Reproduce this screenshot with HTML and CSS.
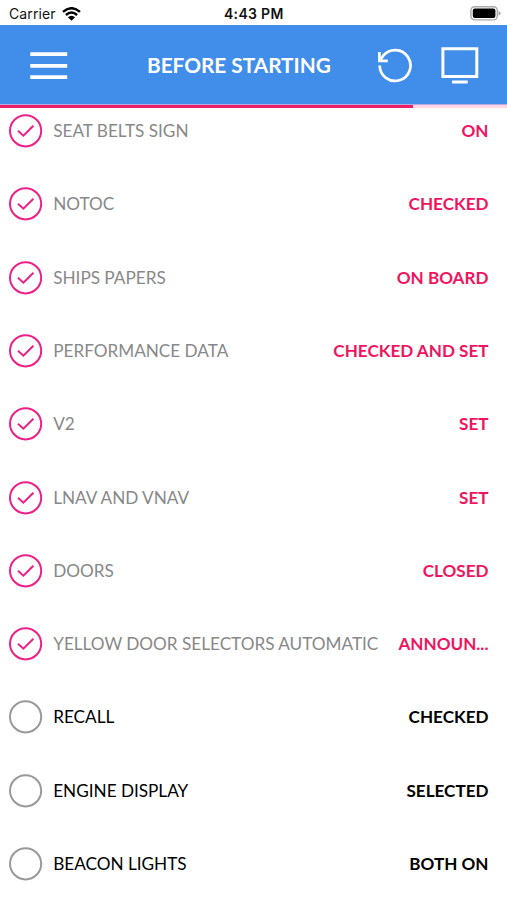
FILE: index.html
```html
<!DOCTYPE html>
<html lang="en">
<head>
<meta charset="utf-8">
<title>Before Starting</title>
<link rel="stylesheet" href="styles.css">
</head>
<body>
<div class="status">
  <span class="carrier">Carrier</span>
  <svg class="wifi" width="19" height="14" viewBox="0 0 19 14"><path d="M1 4.9Q9.5-2.5 18 4.9M3.9 8Q9.5 3.2 15.1 8" fill="none" stroke="#000" stroke-width="2.4"/><path d="M5.9 10.2Q9.5 7.2 13.1 10.2L9.5 13.8Z"/></svg>
  <span class="time">4:43 PM</span>
  <svg class="battery" width="31" height="15" viewBox="0 0 31 15"><rect x=".9" y=".7" width="26.4" height="13.2" rx="3.8" fill="#fff" stroke="#aaa" stroke-width="1.4"/><rect x="2.8" y="2.5" width="22.6" height="9.6" rx="2"/><path d="M28.5 4.8Q30.7 5.8 30.7 7.3T28.5 9.8Z" fill="#aaa"/></svg>
</div>
<header class="bar">
  <svg class="menu" width="38" height="30" viewBox="0 0 38 30"><path d="M.3 4.2h36.9M.3 15.8h36.9M.3 27.2h36.9" stroke="#fff" stroke-width="3.8"/></svg>
  <h1 class="title">BEFORE STARTING</h1>
  <svg class="reset" width="36" height="36" viewBox="0 0 36 36"><path d="M2.7 18.4A15.4 15.4 0 1 0 6.2 8.7L3.4 12.8" fill="none" stroke="#fff" stroke-width="2.7"/><path d="M2.4 5V13.8H10.8" fill="none" stroke="#fff" stroke-width="2.7"/></svg>
  <svg class="screen" width="38" height="40" viewBox="0 0 38 40"><path d="M1.9 3.8H35.8V31.4H1.9ZM11 37H26.7" fill="none" stroke="#fff" stroke-width="3"/></svg>
</header>
<div class="progress"><div class="done"></div></div>
<svg width="0" height="0" class="defs"><symbol id="on" viewBox="0 0 35 34"><circle cx="17.6" cy="16.8" r="15.6"/><path d="M10 16.8L15.4 21.7L25.4 11.8"/></symbol><symbol id="off" viewBox="0 0 35 34"><circle cx="17.6" cy="16.8" r="15.6"/></symbol></svg>
<ul class="list">
  <li class="row checked"><svg class="mark"><use href="#on"/></svg><span class="item">SEAT BELTS SIGN</span><b class="value">ON</b></li>
  <li class="row checked"><svg class="mark"><use href="#on"/></svg><span class="item">NOTOC</span><b class="value">CHECKED</b></li>
  <li class="row checked"><svg class="mark"><use href="#on"/></svg><span class="item">SHIPS PAPERS</span><b class="value">ON BOARD</b></li>
  <li class="row checked"><svg class="mark"><use href="#on"/></svg><span class="item">PERFORMANCE DATA</span><b class="value">CHECKED AND SET</b></li>
  <li class="row checked"><svg class="mark"><use href="#on"/></svg><span class="item">V2</span><b class="value">SET</b></li>
  <li class="row checked"><svg class="mark"><use href="#on"/></svg><span class="item">LNAV AND VNAV</span><b class="value">SET</b></li>
  <li class="row checked"><svg class="mark"><use href="#on"/></svg><span class="item">DOORS</span><b class="value">CLOSED</b></li>
  <li class="row checked"><svg class="mark"><use href="#on"/></svg><span class="item">YELLOW DOOR SELECTORS AUTOMATIC</span><b class="value">ANNOUN...</b></li>
  <li class="row"><svg class="mark"><use href="#off"/></svg><span class="item">RECALL</span><b class="value">CHECKED</b></li>
  <li class="row"><svg class="mark"><use href="#off"/></svg><span class="item">ENGINE DISPLAY</span><b class="value">SELECTED</b></li>
  <li class="row"><svg class="mark"><use href="#off"/></svg><span class="item">BEACON LIGHTS</span><b class="value">BOTH ON</b></li>
</ul>
</body>
</html>
```
FILE: styles.css
```css
* { box-sizing: border-box; }
body { margin: 0; height: 900px; overflow: hidden; background: #fff; font-family: Lato, sans-serif; }
svg { display: block; flex: none; }
.status { display: flex; align-items: center; height: 25px; padding: 2px 6px 0 9px; font: 14px/23px Inter, sans-serif; color: #111; }
.carrier { width: 53px; letter-spacing: .1px; }
.time { margin-left: 143px; font-weight: 600; letter-spacing: .3px; }
.battery { margin-left: auto; }
.bar { display: flex; align-items: center; height: 79px; padding: 0 28px 0 30px; background: #408ee9; color: #fff; }
.title { margin: 0 0 0 79px; font-size: 20.8px; line-height: 26px; font-weight: 700; white-space: nowrap; letter-spacing: -.02px; width: 184px; }
.reset { margin-left: 46px; }
.screen { margin-left: auto; }
.progress { height: 4px; background: #fcd6e4; border-top: 1px solid #b9a9dc; }
.done { width: 413px; height: 3px; background: #e9206a; }
.defs { position: absolute; }
.list { margin: -13.8px 0 0; padding: 0; list-style: none; }
.row { display: flex; align-items: center; height: 73.33px; padding: 0 18.5px 0 8px; font-size: 17.2px; line-height: 24px; white-space: nowrap; color: #000; }
.mark { width: 35px; height: 34px; margin-right: 10.2px; fill: none; stroke: #999; stroke-width: 2; }
.item { letter-spacing: -.02px; }
.value { margin-left: auto; font-size: 17.1px; font-weight: 700; }
.checked { color: #888; }
.checked .mark { stroke: #ee1f86; }
.checked .value { color: #f0145f; }
```
